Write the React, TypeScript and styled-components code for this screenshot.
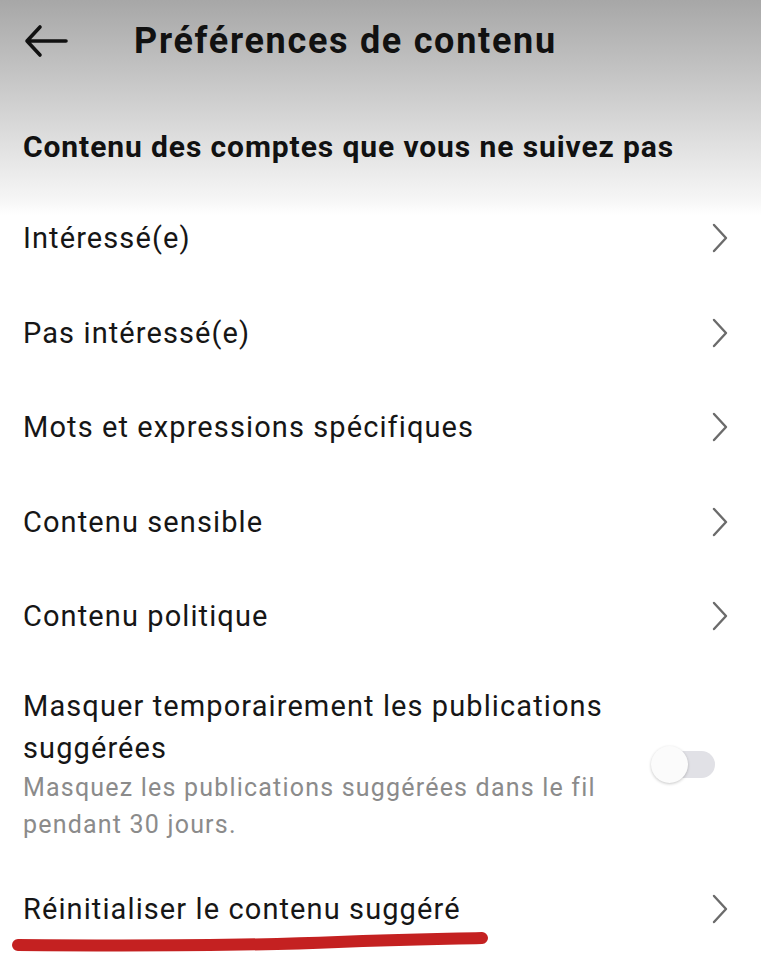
import { FunctionComponent } from 'react';
import styled, { createGlobalStyle } from 'styled-components';

const GlobalStyle = createGlobalStyle`
  html, body {
    margin: 0;
    padding: 0;
  }
  body {
    font-family: Roboto, 'Noto Sans', Arial, sans-serif;
    color: #111;
    background: #fff;
  }
`;

const Screen = styled.div`
  width: 761px;
  min-height: 979px;
  background: linear-gradient(to bottom, #a7a7a7 0px, #f6f6f6 200px, #ffffff 215px);
  overflow: hidden;
`;

const Header = styled.div`
  display: flex;
  align-items: center;
  height: 82px;
  padding: 0 24px;
  gap: 66px;
`;

const BackButton = styled.button`
  display: flex;
  align-items: center;
  background: none;
  border: none;
  padding: 0;
  width: 44px;
  height: 44px;
  color: #111;
`;

const Title = styled.h1`
  margin: 0;
  font-size: 36px;
  font-weight: 700;
  letter-spacing: 1.7px;
`;

const SectionTitle = styled.h2`
  margin: 0;
  padding: 36px 23px 0;
  height: 93px;
  box-sizing: border-box;
  display: flex;
  align-items: center;
  font-size: 30px;
  font-weight: 700;
  letter-spacing: 0.9px;
`;

const List = styled.div`
  display: flex;
  flex-direction: column;
  margin-top: 16px;
`;

const Row = styled.div<{ tall?: boolean }>`
  position: relative;
  display: flex;
  align-items: center;
  justify-content: space-between;
  min-height: 94.5px;
  padding: ${({ tall }) => (tall ? '21px 32px 18px 23px' : '0 32px 0 23px')};
  box-sizing: border-box;
`;

const RowLabel = styled.span`
  font-size: 29px;
  letter-spacing: 1.1px;
  color: #161616;
`;

const TextBlock = styled.div`
  display: flex;
  flex-direction: column;
  max-width: 600px;
`;

const BlockTitle = styled.span`
  font-size: 29px;
  line-height: 42px;
  letter-spacing: 1.1px;
  color: #161616;
`;

const BlockHint = styled.span`
  font-size: 25px;
  line-height: 37.5px;
  letter-spacing: 1.2px;
  color: #8b8b8b;
`;

const Toggle = styled.div`
  position: relative;
  width: 64px;
  height: 37px;
  margin-right: 14px;
  flex-shrink: 0;
`;

const Track = styled.div`
  position: absolute;
  left: 14px;
  right: 0;
  top: 5px;
  height: 27px;
  border-radius: 14px;
  background: #e1e1e6;
`;

const Knob = styled.div`
  position: absolute;
  left: 0;
  top: 0;
  width: 37px;
  height: 37px;
  border-radius: 50%;
  background: #fbfbfb;
  box-shadow: 0 1px 3px rgba(0, 0, 0, 0.22);
`;

const Scribble = styled.svg`
  position: absolute;
  left: 8px;
  top: 67px;
  pointer-events: none;
`;

const Chevron: FunctionComponent = () => (
  <svg width="18" height="30" viewBox="0 0 18 30" fill="none">
    <path
      d="M3 2 L15 15 L3 28"
      stroke="#6b6b6b"
      strokeWidth="2.4"
      strokeLinecap="round"
      strokeLinejoin="round"
    />
  </svg>
);

const items = [
  'Intéressé(e)',
  'Pas intéressé(e)',
  'Mots et expressions spécifiques',
  'Contenu sensible',
  'Contenu politique',
];

const App: FunctionComponent = () => {
  return (
    <>
      <GlobalStyle />
      <Screen>
        <Header>
          <BackButton aria-label="Retour">
            <svg width="44" height="34" viewBox="0 0 44 34" fill="none">
              <path
                d="M3 17 H42 M16 3 L3 17 L16 31"
                stroke="#111"
                strokeWidth="3.6"
                strokeLinecap="round"
                strokeLinejoin="round"
              />
            </svg>
          </BackButton>
          <Title>Préférences de contenu</Title>
        </Header>

        <SectionTitle>Contenu des comptes que vous ne suivez pas</SectionTitle>

        <List>
          {items.map((label) => (
            <Row key={label}>
              <RowLabel>{label}</RowLabel>
              <Chevron />
            </Row>
          ))}

          <Row tall>
            <TextBlock>
              <BlockTitle>Masquer temporairement les publications suggérées</BlockTitle>
              <BlockHint>Masquez les publications suggérées dans le fil pendant 30 jours.</BlockHint>
            </TextBlock>
            <Toggle>
              <Track />
              <Knob />
            </Toggle>
          </Row>

          <Row>
            <RowLabel>Réinitialiser le contenu suggéré</RowLabel>
            <Chevron />
            <Scribble width="484" height="24" viewBox="0 0 484 24" fill="none">
              <path
                d="M10 16 C 140 17, 260 16, 330 13 S 440 10, 474 9"
                stroke="#c42121"
                strokeWidth="12"
                strokeLinecap="round"
              />
            </Scribble>
          </Row>
        </List>
      </Screen>
    </>
  );
};

export default App;
